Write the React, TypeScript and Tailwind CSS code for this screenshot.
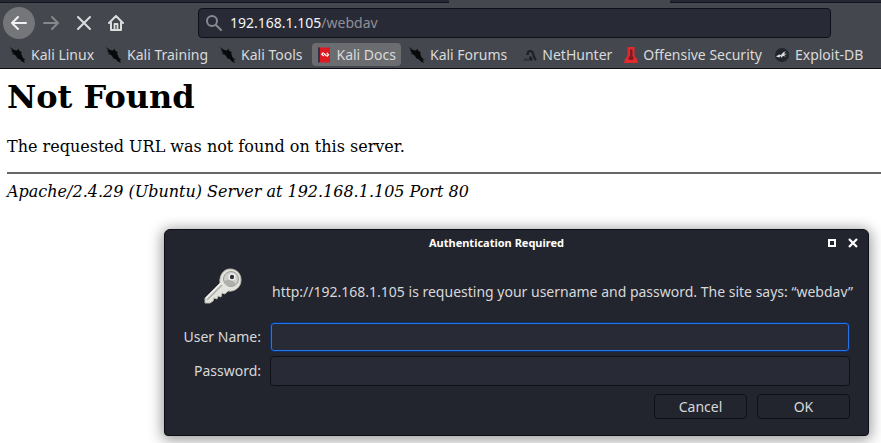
import type { ReactNode } from "react";

const sans = "font-['Noto_Sans','Open_Sans',sans-serif]";

function Dragon() {
  return (
    <svg viewBox="0 0 16 16" className="size-4 shrink-0" aria-hidden="true">
      <path
        d="M0 0l4 3 3 .5 1.500-2L9 3.500l3 2-1 1 1 2 .5 2L16 13l-2.500-.5L15 16l-3-1.500-2.500-2.500-2-.5L6 9 4.500 7.500 1.500 7 3.500 6 .5 3.500 2.500 4z"
        fill="#08090b"
      />
    </svg>
  );
}

function Book() {
  return (
    <svg viewBox="0 0 14 16" className="h-4 w-3.5 shrink-0" aria-hidden="true">
      <rect x="1" y="0.5" width="12" height="15" fill="#dd1a22" />
      <rect x="1" y="0.5" width="2" height="15" fill="#343047" />
      <path d="M6.500 5.500L4.800 7.300l2 1.700M9.800 6l1.700 1.800-1.700 1.700M7 6.500l2.500 2.500" stroke="#fff" strokeWidth="1.2" fill="none" />
    </svg>
  );
}

function Hook() {
  return (
    <svg viewBox="0 0 14 14" className="size-3.5 shrink-0" aria-hidden="true">
      <path d="M4.500 7Q4.500 3 7 3q3 0 3.500 4 .5 3 2.500 5" stroke="#1c2026" strokeWidth="2.200" fill="none" />
      <path d="M0 13l2-3 2 0 0 1 3-1-1 3z" fill="#30353c" />
      <path d="M6 9l2-1 2 4-3 1z" fill="#1c2026" />
    </svg>
  );
}

function Tower() {
  return (
    <svg viewBox="0 0 14 16" className="h-4 w-3.5 shrink-0" aria-hidden="true">
      <path d="M3.500 0h7v9l2.500 3 1 4H0l1-4 2.500-3z" fill="#df2b2e" />
      <path d="M6 3l1-1 1.500 1v6L10 11l-1.500 2h-3L4 11l2-2z" fill="#811a20" />
    </svg>
  );
}

function Bug() {
  return (
    <svg viewBox="0 0 16 16" className="size-4 shrink-0" aria-hidden="true">
      <circle cx="8" cy="8" r="7" fill="#22252d" />
      <path d="M2 9.500l3-2 2 .5 2-2.500 3-1.500-2 2.500 3 .5-3 1 2 1.500-3-.5-2 2 0-2-2 1.500z" fill="#d8dadb" />
    </svg>
  );
}

function Key() {
  return (
    <svg viewBox="0 0 38 36" className="h-9 w-[38px]" aria-hidden="true">
      <path
        d="M16 15C15 7 20 1 26 1c7 0 11 5 11 11 0 7-6 12-13 11l-3 3-3-1-1 4-3-1-1 3-3-1-1 3-3 2H1v-5z"
        fill="#e4e4de"
        stroke="#b8b8b2"
        strokeWidth="1"
      />
      <circle cx="27" cy="11" r="7.500" fill="#cfcfcb" stroke="#999995" strokeWidth="1" />
      <path d="M20 13a7 7 0 0 0 12 3l-5-5z" fill="#aeb0ad" />
      <circle cx="28" cy="9" r="3.500" fill="#f4f4f0" />
      <circle cx="28" cy="9" r="2.200" fill="#30323a" />
      <path d="M3 32l15-15" stroke="#aaaaa5" strokeWidth="1.5" />
      <path d="M2 30l15-15" stroke="#fafaf6" strokeWidth="1" />
    </svg>
  );
}

const bookmarks: { label: string; icon: ReactNode; style: string }[] = [
  { label: "Kali Linux", icon: <Dragon />, style: "mr-3" },
  { label: "Kali Training", icon: <Dragon />, style: "mr-3" },
  { label: "Kali Tools", icon: <Dragon />, style: "mr-2.5" },
  { label: "Kali Docs", icon: <Book />, style: "rounded bg-[#6a6c70] px-[5px] mr-2" },
  { label: "Kali Forums", icon: <Dragon />, style: "mr-4" },
  { label: "NetHunter", icon: <Hook />, style: "mr-3" },
  { label: "Offensive Security", icon: <Tower />, style: "mr-3" },
  { label: "Exploit-DB", icon: <Bug />, style: "mr-3" },
];

function Toolbar() {
  return (
    <header className={`border-b border-[#0c0e14] bg-[#44474d] text-[#d9dadb] ${sans}`}>
      <div className="flex h-[3px]">
        <div className="w-[51%] border-b border-[#11131b] bg-[#252832]" />
        <div className="flex-1" />
        <div className="w-[24%] border-b border-[#11131b] bg-[#252832]" />
      </div>
      <div className="flex h-10 items-center pl-[3px]">
        <button aria-label="Back" className="flex size-8 items-center justify-center rounded-full bg-[#74767a]">
          <svg viewBox="0 0 16 16" className="size-4" fill="none" stroke="#f2f2f2" strokeWidth="2" strokeLinecap="round" strokeLinejoin="round">
            <path d="M15 8H1M7 2L1 8l6 6" />
          </svg>
        </button>
        <button aria-label="Forward" className="flex size-8 items-center justify-center">
          <svg viewBox="0 0 16 16" className="size-4" fill="none" stroke="#85878b" strokeWidth="2" strokeLinecap="round" strokeLinejoin="round">
            <path d="M1 8h14M9 2l6 6-6 6" />
          </svg>
        </button>
        <button aria-label="Stop" className="ml-px flex size-8 items-center justify-center">
          <svg viewBox="0 0 16 16" className="size-4" fill="none" stroke="#dcdddd" strokeWidth="2" strokeLinecap="round">
            <path d="M2 2l12 12M14 2L2 14" />
          </svg>
        </button>
        <button aria-label="Home" className="flex size-8 items-center justify-center">
          <svg viewBox="0 0 16 16" className="size-4" fill="none" stroke="#dcdddd" strokeWidth="2" strokeLinecap="round" strokeLinejoin="round">
            <path d="M1 8l7-7 7 7M3 7v8h10V7" />
            <path d="M6.500 14V9h3v5" strokeWidth="1.800" />
          </svg>
        </button>
        <div className="relative mr-[50px] ml-[66px] h-[30px] flex-1">
          <input
            aria-label="Address"
            defaultValue="192.168.1.105/webdav"
            className="size-full rounded-sm border border-[#0e1018] bg-[#282a36] pl-8 text-sm text-transparent outline-none"
          />
          <svg viewBox="0 0 16 16" className="pointer-events-none absolute top-[7px] left-2 size-4" fill="none" stroke="#888990" strokeWidth="2" strokeLinecap="round">
            <circle cx="6" cy="6" r="5" />
            <path d="M10 10l5 5" />
          </svg>
          <span aria-hidden="true" className="pointer-events-none absolute inset-y-0 left-8 flex items-center text-sm text-[#909197]">
            <span className="text-[#f4f4f5]">192.168.1.105</span>/webdav
          </span>
        </div>
      </div>
      <nav aria-label="Bookmarks" className="flex h-[25px] items-start overflow-hidden pl-2.5">
        {bookmarks.map((b) => (
          <a key={b.label} href="#" className={`flex h-[23px] shrink-0 items-center gap-[5px] text-sm whitespace-nowrap ${b.style}`}>
            {b.icon}
            {b.label}
          </a>
        ))}
      </nav>
    </header>
  );
}

function AuthDialog() {
  return (
    <form
      role="dialog"
      aria-labelledby="auth-title"
      onSubmit={(e) => e.preventDefault()}
      className={`absolute top-[229px] right-3 left-[164px] rounded-t-md rounded-b-sm border border-[#0d0f15] bg-[#23252e] text-sm text-[#d7d8da] shadow-[0_2px_14px_2px_rgba(0,0,0,0.4)] ${sans}`}
    >
      <div className="relative flex h-[26px] items-center justify-center text-white">
        <h2 id="auth-title" className="pr-10 text-[11px] font-bold">Authentication Required</h2>
        <div className="absolute inset-y-0 right-2.5 flex items-center gap-3">
          <button type="button" aria-label="Maximize" className="size-2 border-2 border-white" />
          <button type="button" aria-label="Close">
            <svg viewBox="0 0 10 10" className="size-2.5" stroke="white" strokeWidth="2.200">
              <path d="M1 1l8 8M9 1L1 9" />
            </svg>
          </button>
        </div>
      </div>
      <div className="flex h-[66px] items-center pt-1.5 pl-[39px]">
        <div className="mr-[30px] pb-3"><Key /></div>
        <p className="whitespace-nowrap">http://192.168.1.105 is requesting your username and password. The site says: “webdav”</p>
      </div>
      <div className="grid grid-cols-[96px_1fr] items-center gap-x-[9px] gap-y-1 pr-[18px]">
        <label htmlFor="user" className="text-right">User Name:</label>
        <input id="user" className="h-[30px] rounded border border-[#0c3172] bg-[#282a36] px-2 shadow-[inset_0_0_0_1px_#2674e8] outline-none" />
        <label htmlFor="password" className="text-right">Password:</label>
        <input id="password" type="password" className="h-[30px] rounded border border-[#0e1018] bg-[#282a36] px-2 outline-none" />
      </div>
      <div className="flex justify-end gap-2.5 pt-2 pr-[18px] pb-4">
        <button type="button" className="h-[25px] w-[93px] rounded border border-[#0e1018]">Cancel</button>
        <button type="submit" className="h-[25px] w-[93px] rounded border border-[#0e1018]">OK</button>
      </div>
    </form>
  );
}

export default function App() {
  return (
    <div className="relative min-h-screen overflow-hidden bg-white">
      <Toolbar />
      <main className="pl-[7px] font-['DejaVu_Serif',serif] text-base leading-5 text-black">
        <h1 className="pt-2 text-[32px] leading-10 font-bold">Not Found</h1>
        <p className="pt-5">The requested URL was not found on this server.</p>
        <hr className="mt-[15px] mb-2 border-t-2 border-[#666]" />
        <address>Apache/2.4.29 (Ubuntu) Server at 192.168.1.105 Port 80</address>
      </main>
      <AuthDialog />
    </div>
  );
}
